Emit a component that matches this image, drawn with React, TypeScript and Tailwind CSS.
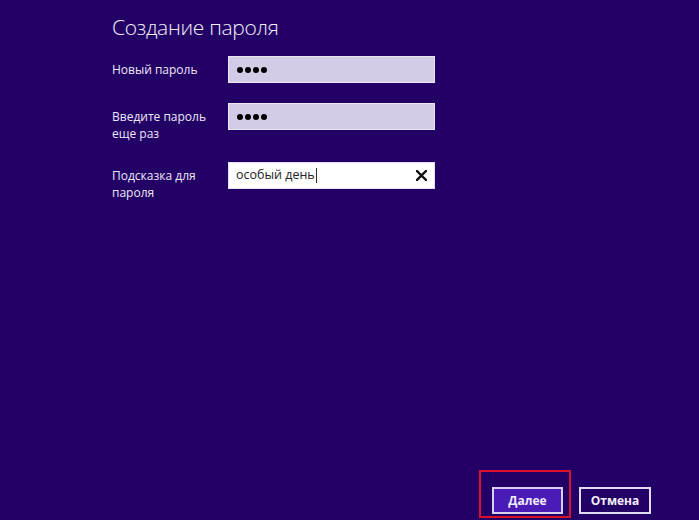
import React from 'react';

const font = { fontFamily: '"Open Sans", "Noto Sans", sans-serif' };

function Dots() {
  return (
    <div className="flex items-center gap-[2px] pl-[8px]">
      {[0, 1, 2, 3].map((i) => (
        <span key={i} className="block w-[6px] h-[6px] rounded-full bg-black" />
      ))}
    </div>
  );
}

export default function App() {
  return (
    <div className="w-[699px] h-[520px] bg-[#230066] text-white flex flex-col overflow-hidden" style={font}>
      <div className="pl-[112px] pt-[12px]">
        <h1 className="text-[21px] leading-[30px] font-light text-[#f3f0fa] tracking-[-0.3px]">Создание пароля</h1>

        <div className="mt-[14px] flex flex-col">
          {/* new password */}
          <div className="flex">
            <div className="w-[116px] h-[27px] flex items-center text-[12px] text-[#ece8f6]">Новый пароль</div>
            <div className="w-[207px] h-[27px] bg-[#d4cce6] border border-[#ebe6f4] flex items-center">
              <Dots />
            </div>
          </div>

          {/* repeat */}
          <div className="flex mt-[20px]">
            <div className="w-[116px] pt-[5px] text-[12px] leading-[17px] text-[#ece8f6]">
              Введите пароль
              <br />
              еще раз
            </div>
            <div className="w-[207px] h-[27px] bg-[#d4cce6] border border-[#ebe6f4] flex items-center">
              <Dots />
            </div>
          </div>

          {/* hint */}
          <div className="flex mt-[20px]">
            <div className="w-[116px] pt-[5px] text-[12px] leading-[17px] text-[#ece8f6]">
              Подсказка для
              <br />
              пароля
            </div>
            <div className="w-[207px] h-[27px] bg-white border border-[#e4def0] flex items-center justify-between pl-[7px] pr-[7px]">
              <div className="flex items-center text-[12.5px] text-[#222]">
                особый день
                <span className="block w-px h-[15px] bg-[#333] ml-[1px]" />
              </div>
              <svg width="11" height="11" viewBox="0 0 11 11">
                <path d="M1 1 L10 10 M10 1 L1 10" stroke="#111" strokeWidth="2.4" strokeLinecap="square" />
              </svg>
            </div>
          </div>
        </div>
      </div>

      <div className="mt-auto flex justify-end items-end gap-[8px] pr-[48px] pb-[2px]">
        <div className="border-2 border-[#d8122b] pl-[11px] pr-[6px] pt-[15px] pb-[2px]">
          <button className="w-[71px] h-[27px] bg-[#4a1bb6] border-2 border-[#d9d1f1] text-[12px] font-bold text-[#f1eefa]">
            Далее
          </button>
        </div>
        <button className="w-[72px] h-[27px] mb-[4px] bg-[#230066] border-2 border-[#e2dcf3] text-[12px] font-bold text-[#f1eefa]">
          Отмена
        </button>
      </div>
    </div>
  );
}
